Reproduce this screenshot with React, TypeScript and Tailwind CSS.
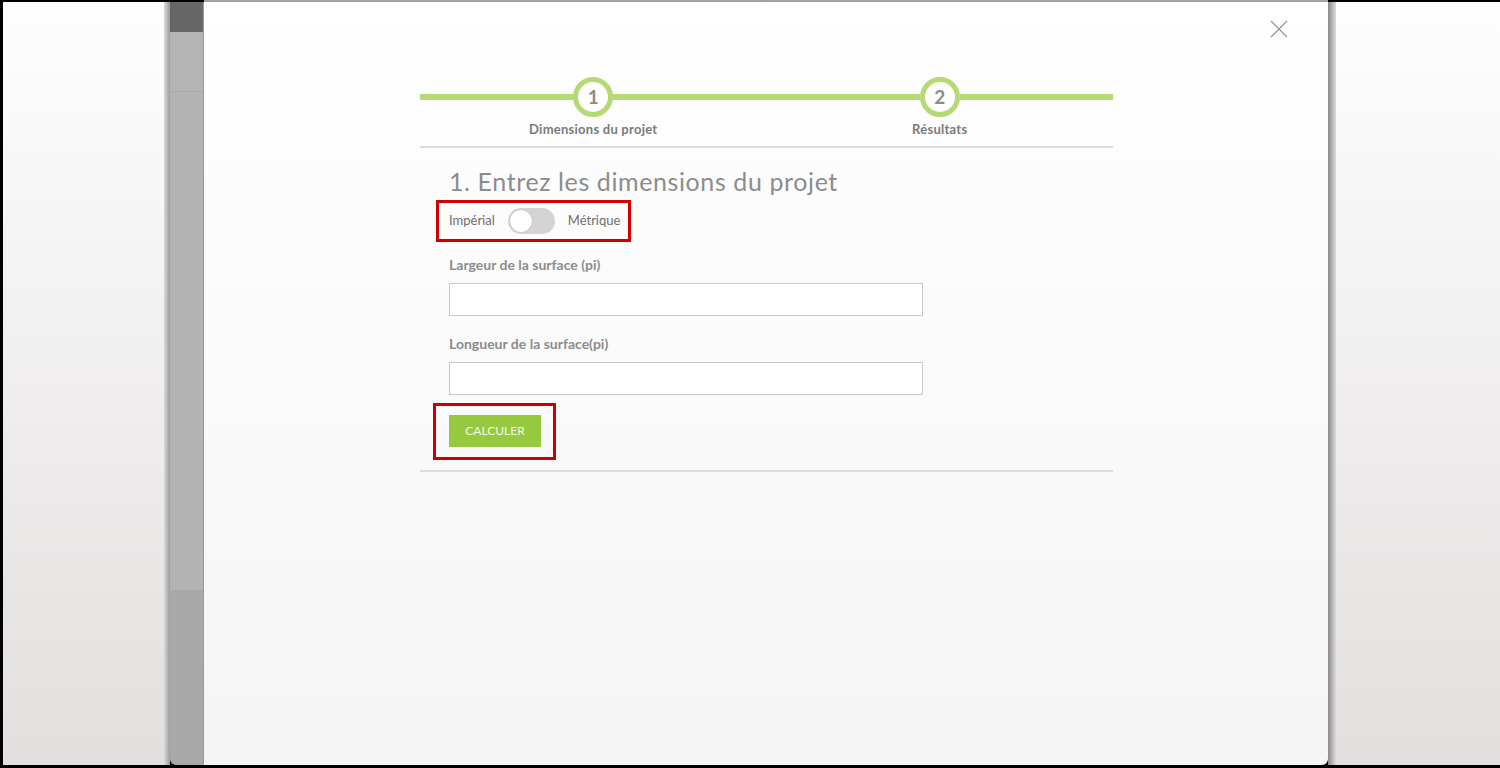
import React from 'react';

const font = { fontFamily: 'Lato, "Open Sans", sans-serif' };

function Step({ n, label }: { n: number; label: string }) {
  return (
    <div className="flex flex-col">
      <div className="flex h-[40px] items-center">
        <div className="h-[6px] flex-1 bg-[#b5d974]" />
        <div className="flex h-[40px] w-[40px] items-center justify-center rounded-full border-[5px] border-[#b5d974] bg-white text-[19px] font-bold text-[#8a8a8a]">
          {n}
        </div>
        <div className="h-[6px] flex-1 bg-[#b5d974]" />
      </div>
      <div className="mt-[4px] text-center text-[13px] leading-[16px] font-bold tracking-[0.25px] text-[#7a7a7a]">
        {label}
      </div>
    </div>
  );
}

function Field({ label, top }: { label: string; top: string }) {
  return (
    <>
      <div className={`${top} text-[14px] leading-[18px] font-bold text-[#8c8c8c]`}>{label}</div>
      <input className="mt-[9px] h-[33px] w-[474px] border border-[#c9c9c9] bg-white outline-none" />
    </>
  );
}

export default function App() {
  return (
    <div className="flex h-[768px] w-[1500px] overflow-hidden bg-black pb-[3px] pl-[3px]" style={font}>
      {/* page behind the lightbox */}
      <div className="mt-[2px] w-[161px] bg-gradient-to-b from-[#fefefe] to-[#e2dfde]" />
      <div className="mt-[2px] w-[6px] bg-gradient-to-r from-[#dcdada] to-[#9c9c9c]" />
      <div className="mt-[2px] flex w-[34px] flex-col overflow-hidden rounded-bl-[6px] border-r border-[#9a9a9a]">
        <div className="h-[30px] bg-[#666666]" />
        <div className="h-[60px] border-b border-[#aaaaaa] bg-[#b4b4b4]" />
        <div className="h-[498px] bg-[#b3b3b3]" />
        <div className="flex-1 bg-[#a9a9a9]" />
      </div>

      {/* modal */}
      <div className="relative w-[1124px] rounded-br-[6px] border-t-2 border-[#a3a3a3] bg-gradient-to-b from-white to-[#f6f5f5]">
        <button className="absolute top-[18px] right-[40px] text-[#9b9b9b]">
          <svg width="18" height="18" viewBox="0 0 18 18" fill="none" stroke="currentColor" strokeWidth="1.4">
            <path d="M1 1L17 17M17 1L1 17" />
          </svg>
        </button>

        <div className="ml-[216px] w-[693px] pt-[75px]">
          <div className="grid grid-cols-2">
            <Step n={1} label="Dimensions du projet" />
            <Step n={2} label="Résultats" />
          </div>
          <div className="mt-[9px] h-[2px] bg-[#dcdcdc]" />

          <div className="flex flex-col items-start pl-[29px]">
            <h1 className="mt-[18px] text-[25px] leading-[30px] font-normal tracking-[0.6px] text-[#8c8c8c]">
              1. Entrez les dimensions du projet
            </h1>

            <div className="mt-[4px] ml-[-13px] flex items-center gap-[13px] border-[3px] border-[#cc0000] py-[5px] pr-[8px] pl-[10px] text-[13px] text-[#6e6e6e]">
              <span>Impérial</span>
              <div className="flex h-[26px] w-[47px] items-center rounded-full bg-[#d4d4d4] pl-[2px]">
                <div className="h-[22px] w-[22px] rounded-full bg-white shadow-[0_0_1px_rgba(0,0,0,0.3)]" />
              </div>
              <span>Métrique</span>
            </div>

            <Field label="Largeur de la surface (pi)" top="mt-[14px]" />
            <Field label="Longueur de la surface(pi)" top="mt-[19px]" />

            <div className="mt-[8px] ml-[-16px] border-[3px] border-[#cc0000] pt-[9px] pr-[12px] pb-[10px] pl-[13px]">
              <button className="h-[32px] w-[92px] bg-[#96c93d] text-[12px] text-[#f3f8e8] uppercase">Calculer</button>
            </div>
          </div>

          <div className="mt-[10px] h-[2px] bg-[#dcdcdc]" />
        </div>
      </div>

      <div className="mt-[2px] w-[8px] bg-gradient-to-r from-[#8a8a8a] to-[#dedbdb]" />
      <div className="mt-[2px] flex-1 bg-gradient-to-b from-[#fefefe] to-[#e2dfde]" />
    </div>
  );
}
